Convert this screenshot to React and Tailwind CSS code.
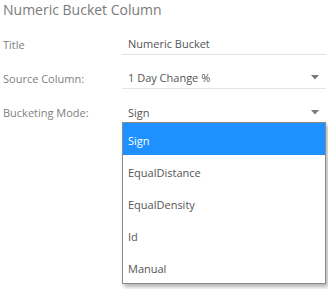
import React from 'react';

const options = ['Sign', 'EqualDistance', 'EqualDensity', 'Id', 'Manual'];

function Caret() {
  return (
    <svg width="8" height="5" viewBox="0 0 8 5" className="shrink-0 mb-[5px]">
      <path d="M0 0 H8 L4 4.5 Z" fill="#7a7a7a" />
    </svg>
  );
}

function Field({ label, value, select, underline = true, children }) {
  return (
    <div className="flex h-[34px]">
      <div className="w-[122px] flex items-end pb-[3px] pl-[3px] text-[11px] leading-[15px] text-[#808080]">{label}</div>
      <div
        className={
          'relative w-[204px] flex items-end pb-[3px] pl-[6px] pr-[7px] text-[11px] leading-[15px] text-[#555] ' +
          (underline ? 'border-b border-[#e3e3e3]' : '')
        }
      >
        <span className="flex-1">{value}</span>
        {select && <Caret />}
        {children}
      </div>
    </div>
  );
}

export default function App() {
  return (
    <div
      className="w-[328px] h-[289px] bg-white overflow-hidden"
      style={{ fontFamily: '"Open Sans", sans-serif' }}
    >
      <div className="h-[21px] pl-[3px] text-[14px] leading-[19px] text-[#7a7a7a]">Numeric Bucket Column</div>
      <Field label="Title" value="Numeric Bucket" />
      <Field label="Source Column:" value="1 Day Change %" select />
      <Field label="Bucketing Mode:" value="Sign" select underline={false}>
        <div className="absolute left-0 top-[33px] w-[204px] border border-[#8a8a8a] bg-white shadow-[2px_3px_4px_rgba(0,0,0,0.3)] z-10">
          {options.map((o, i) => (
            <div
              key={o}
              className={
                'h-[32px] flex items-center pt-[2px] pl-[5px] text-[11px] ' +
                (i === 0 ? 'bg-[#1e90ff] text-white' : 'text-[#555]')
              }
            >
              {o}
            </div>
          ))}
        </div>
      </Field>
    </div>
  );
}
